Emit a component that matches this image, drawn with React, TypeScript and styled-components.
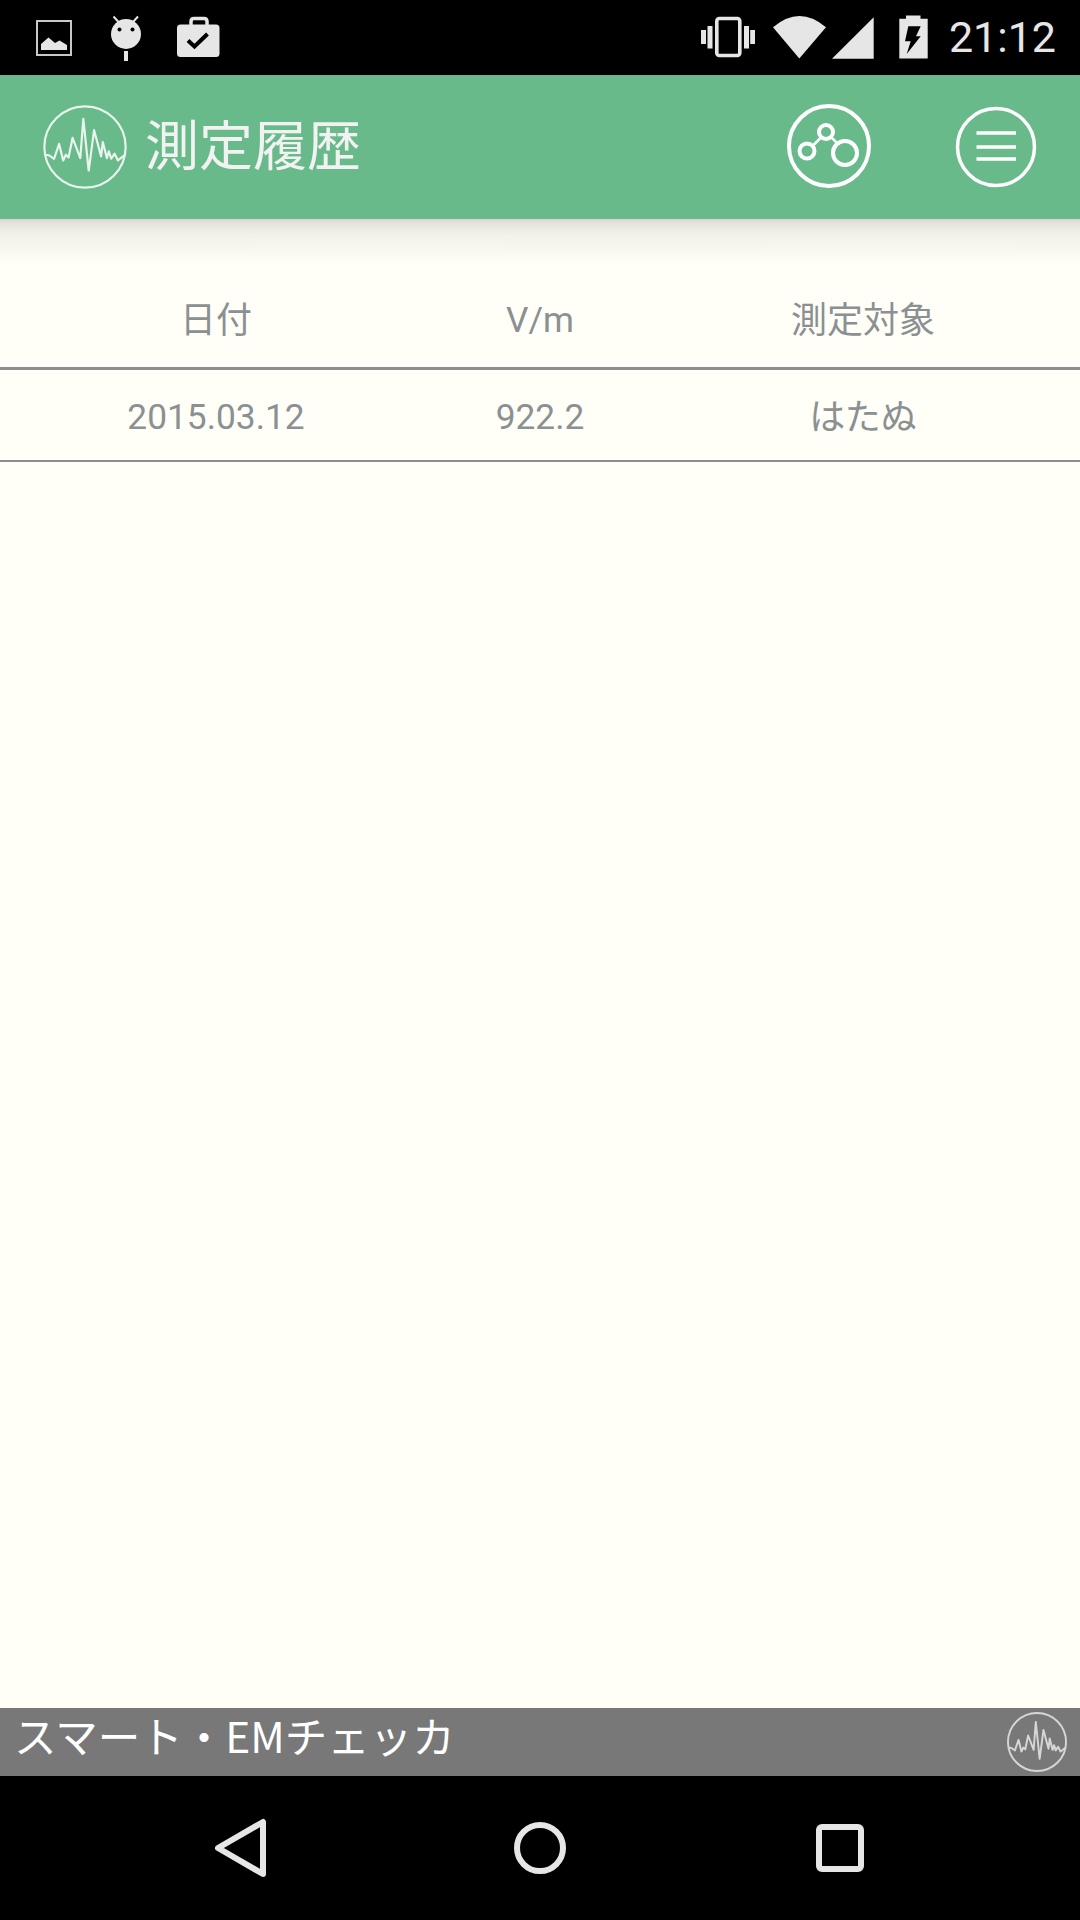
import styled, { createGlobalStyle } from "styled-components";

const GlobalStyle = createGlobalStyle`
  html, body {
    margin: 0;
    padding: 0;
    background: #000;
  }
  * {
    box-sizing: border-box;
  }
`;

const Screen = styled.div`
  width: 1080px;
  height: 1920px;
  display: flex;
  flex-direction: column;
  background: #fffff7;
  font-family: Roboto, "Noto Sans CJK JP", sans-serif;
  overflow: hidden;
`;

const StatusBar = styled.div`
  height: 75px;
  flex: none;
  background: #000;
  display: flex;
  align-items: center;
  justify-content: space-between;
  padding: 0 24px 0 36px;
  color: #e6e6e6;
`;

const StatusGroup = styled.div`
  display: flex;
  align-items: center;
`;

const StatusIcon = styled.svg<{ $left?: number }>`
  display: block;
  height: 75px;
  flex: none;
  margin-left: ${(p) => p.$left ?? 0}px;
`;

const Clock = styled.span`
  font-size: 43px;
  line-height: 75px;
  margin-left: 21px;
`;

const TopBar = styled.header`
  height: 144px;
  flex: none;
  background: #69ba8a;
  display: flex;
  align-items: center;
  padding: 0 40px 0 43px;
  color: #f2f2f2;
`;

const Title = styled.h1`
  margin: -9px 0 0 18px;
  flex: 1;
  font-family: "Noto Sans CJK JP", sans-serif;
  font-size: 54px;
  font-weight: 400;
  line-height: 1;
`;

const BarButton = styled.svg<{ $gap?: number }>`
  display: block;
  width: 88px;
  height: 88px;
  flex: none;
  margin-left: ${(p) => p.$gap ?? 0}px;
`;

const Content = styled.main`
  flex: 1;
  padding-top: 35px;
  background: linear-gradient(#d6d6ce, #e4e4db 4px, #f1f1e8 15px, #fffff7 46px) no-repeat;
  background-size: 100% 46px;
  color: #8b9093;
  font-size: 36px;
`;

const TableRow = styled.div<{ $height: number; $line: number; $shift: number }>`
  display: grid;
  grid-template-columns: 432px 216px 430px;
  align-items: center;
  text-align: center;
  height: ${(p) => p.$height}px;
  padding-top: ${(p) => p.$shift}px;
  border-bottom: ${(p) => p.$line}px solid #8d8f8f;
`;

const Cell = styled.div<{ $numeric?: boolean }>`
  line-height: 1;
  font-size: ${(p) => (p.$numeric ? 35.3 : 36)}px;
`;

const Footer = styled.footer`
  height: 68px;
  flex: none;
  background: #787878;
  display: flex;
  align-items: center;
  justify-content: space-between;
  padding: 0 13px 0 14px;
  color: #fff;
`;

const FooterText = styled.span`
  font-family: "Noto Sans CJK JP", sans-serif;
  font-size: 42.500px;
  line-height: 1;
  margin-top: -13px;
`;

const NavBar = styled.nav`
  height: 144px;
  flex: none;
  background: #000;
  display: grid;
  grid-template-columns: repeat(3, 300px);
  justify-content: center;
  align-items: center;
  justify-items: center;
`;

const NavIcon = styled.svg`
  display: block;
  width: 64px;
  height: 64px;
`;

const LogoMark = styled.svg`
  display: block;
  flex: none;
`;

const WAVE =
  "6,148 18,150 33,160 48,116 60,165 68,148 76,156 88,98 111,158 120,41 136,195 152,75 173,153 178,110 190,158 196,138 203,160 213,145 223,165 238,153 245,148";

const WaveLogo = ({ size, opacity, stroke }: { size: number; opacity: number; stroke: number }) => (
  <LogoMark width={size} height={size} viewBox="0 0 250 250">
    <g fill="none" stroke="#fff" opacity={opacity}>
      <circle cx="125" cy="125" r="121" strokeWidth={stroke} />
      <polyline points={WAVE} strokeWidth={stroke} strokeLinejoin="round" />
    </g>
  </LogoMark>
);

const App = () => (
  <Screen>
    <GlobalStyle />
    <StatusBar>
      <StatusGroup>
        <StatusIcon viewBox="36 0 36 75" width="36">
          <rect x="37" y="21" width="34" height="34" fill="none" stroke="#c8c8c8" strokeWidth="2" />
          <path d="M41 50v-6l7.500-6.500 6.500 5.500 4.500-2.500 7.500 4.500v5z" fill="#e6e6e6" />
        </StatusIcon>
        <StatusIcon viewBox="111 0 31 75" width="31" $left={39}>
          <circle cx="126" cy="34" r="15" fill="#e6e6e6" />
          <path d="M113.500 16.500l5 5.500M138 16.500l-5 5.500" stroke="#e6e6e6" strokeWidth="2" />
          <circle cx="119.500" cy="29.500" r="2" fill="#000" />
          <circle cx="132.500" cy="29.500" r="2" fill="#000" />
          <rect x="124" y="51" width="4" height="10" fill="#e6e6e6" />
        </StatusIcon>
        <StatusIcon viewBox="177 0 43 75" width="43" $left={35}>
          <path
            d="M191 26v-4.500q0-3 3-3h10q3 0 3 3v4.500"
            fill="none"
            stroke="#e6e6e6"
            strokeWidth="3.500"
          />
          <rect x="177" y="24.500" width="42.500" height="32.500" rx="3.500" fill="#e6e6e6" />
          <path d="M188 40.500l6.500 6 13-12.500" fill="none" stroke="#000" strokeWidth="4" />
        </StatusIcon>
      </StatusGroup>
      <StatusGroup>
        <StatusIcon viewBox="701 0 54 75" width="54">
          <rect x="716.800" y="18.500" width="23" height="37" rx="2.500" fill="none" stroke="#e6e6e6" strokeWidth="3.600" />
          <path d="M701 30h5v14h-5zM707.500 26h5v22.500h-5zM744 26h5v22.500h-5zM750.200 30h5v14h-5z" fill="#e6e6e6" />
        </StatusIcon>
        <StatusIcon viewBox="773 0 101 75" width="101" $left={18}>
          <path d="M773 27.300Q799.500 4.700 826 27.300L799.300 58.500z" fill="#e6e6e6" />
          <path d="M832 58.700L873.700 17.300V58.700z" fill="#e6e6e6" />
        </StatusIcon>
        <StatusIcon viewBox="899 0 29 75" width="29" $left={25}>
          <path d="M906 15.500h14.500v3.300h7.200v39.600h-28.400V18.800h6.700z" fill="#e6e6e6" />
          <path d="M908.300 26.300h12.400l-4.700 10h4.700l-14 17.700 4-12.700h-5.700z" fill="#000" />
        </StatusIcon>
        <Clock>21:12</Clock>
      </StatusGroup>
    </StatusBar>
    <TopBar>
      <WaveLogo size={84} opacity={0.85} stroke={6.5} />
      <Title>測定履歴</Title>
      <BarButton viewBox="0 0 88 88">
        <g fill="none" stroke="#fff" strokeWidth="4">
          <circle cx="44" cy="43" r="40" />
          <circle cx="22" cy="48" r="7.500" />
          <circle cx="41" cy="29" r="7" />
          <circle cx="60" cy="50" r="12" />
          <path d="M27.500 43l8-8M46 34l6 6" strokeWidth="2.500" />
        </g>
      </BarButton>
      <BarButton viewBox="0 0 88 88" $gap={79}>
        <g fill="none" stroke="#fff">
          <circle cx="44" cy="44" r="38.500" strokeWidth="3.500" />
          <path d="M24.500 30h39.500M24.500 44h39.500M24.500 56h39.500" strokeWidth="3.500" />
        </g>
      </BarButton>
    </TopBar>
    <Content>
      <TableRow $height={116} $line={3} $shift={21}>
        <Cell>日付</Cell>
        <Cell $numeric>V/m</Cell>
        <Cell>測定対象</Cell>
      </TableRow>
      <TableRow $height={92} $line={2} $shift={5}>
        <Cell $numeric>2015.03.12</Cell>
        <Cell $numeric>922.2</Cell>
        <Cell>はたぬ</Cell>
      </TableRow>
    </Content>
    <Footer>
      <FooterText>スマート・EMチェッカ</FooterText>
      <WaveLogo size={60} opacity={0.7} stroke={8} />
    </Footer>
    <NavBar>
      <NavIcon viewBox="0 0 64 64">
        <path d="M10 32L55 6V58z" fill="none" stroke="#e6e6e6" strokeWidth="6" strokeLinejoin="round" />
      </NavIcon>
      <NavIcon viewBox="0 0 64 64">
        <circle cx="32" cy="32" r="23" fill="none" stroke="#e6e6e6" strokeWidth="6" />
      </NavIcon>
      <NavIcon viewBox="0 0 64 64">
        <rect x="11" y="11" width="42" height="42" rx="3" fill="none" stroke="#e6e6e6" strokeWidth="6" />
      </NavIcon>
    </NavBar>
  </Screen>
);

export default App;
